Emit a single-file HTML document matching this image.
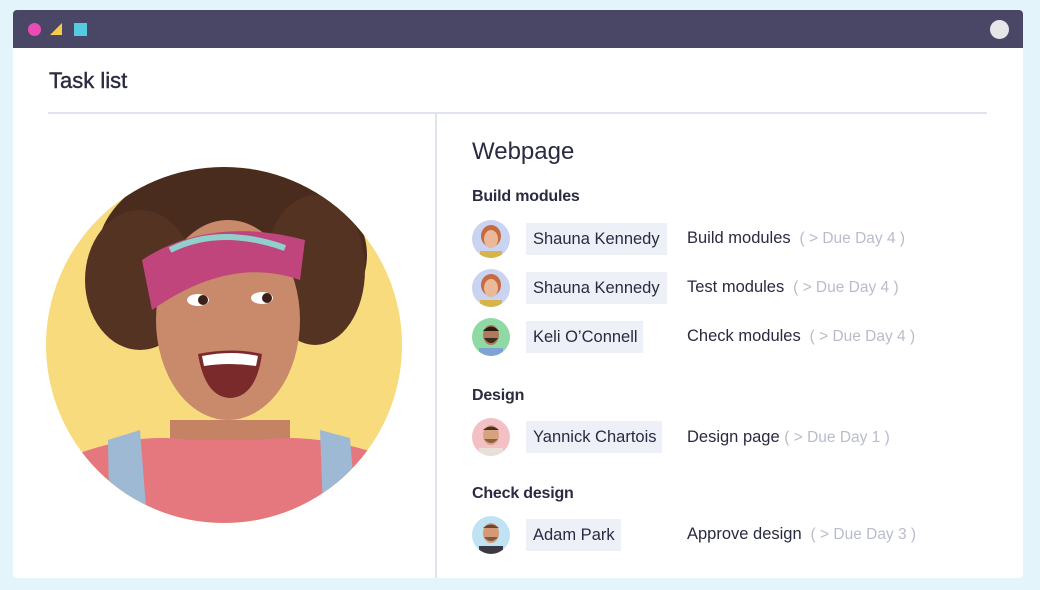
<!DOCTYPE html>
<html><head><meta charset="utf-8"><style>
*{margin:0;padding:0;box-sizing:border-box}
body{width:1040px;height:590px;background:#e3f4fb;font-family:"Liberation Sans",sans-serif;position:relative;overflow:hidden;color:#2a2a40}
.win{position:absolute;left:13px;top:10px;width:1010px;height:568px;background:#fff;border-radius:4px;overflow:hidden}
.bar{height:38px;background:#4a4766;position:relative}
.t{position:absolute;white-space:nowrap}
.h{font-size:16px;color:#2a2a40;font-weight:bold;letter-spacing:-0.2px}
.chip{position:absolute;height:32px;background:#eef0f8;font-size:16.5px;line-height:32px;padding-left:7px;color:#2a2a40}
.task{position:absolute;font-size:16.5px;color:#2a2a40;white-space:nowrap}
.task span{color:#b9bccb;font-size:15.5px}
.av{position:absolute;width:38px;height:38px;border-radius:50%;overflow:hidden}
</style></head><body>
<div class="win">
<div class="bar">
<div style="position:absolute;left:15px;top:13px;width:13px;height:13px;border-radius:50%;background:#ec4bb6"></div>
<svg style="position:absolute;left:36px;top:12px" width="14" height="14"><polygon points="13,1 13,13 1,13" fill="#f5cd4a"/></svg>
<div style="position:absolute;left:61px;top:13px;width:13px;height:13px;background:#54cbe0"></div>
<div style="position:absolute;left:977px;top:10px;width:19px;height:19px;border-radius:50%;background:#e6e6ea"></div>
</div>
</div>
<div class="t" style="left:49px;top:68px;font-size:22px;color:#2a2a40;-webkit-text-stroke:0.4px #2a2a40">Task list</div>
<div style="position:absolute;left:48px;top:112px;width:939px;height:2px;background:#dfe4ef"></div>
<div style="position:absolute;left:435px;top:114px;width:2px;height:464px;background:#dfe4ef"></div>

<svg style="position:absolute;left:0;top:0" width="1040" height="590">
<defs><clipPath id="c"><circle cx="224" cy="345" r="178"/></clipPath></defs>
<circle cx="224" cy="345" r="178" fill="#f8db7c"/>
<g clip-path="url(#c)">
<ellipse cx="232" cy="255" rx="135" ry="95" fill="#4a2c1e"/>
<ellipse cx="140" cy="280" rx="55" ry="70" fill="#553322"/>
<ellipse cx="315" cy="270" rx="50" ry="75" fill="#553322"/>
<rect x="170" y="420" width="120" height="60" fill="#c58366"/>
<path d="M40 470 Q120 430 190 440 L260 440 Q330 430 420 470 L420 560 L40 560Z" fill="#e4787e"/>
<path d="M108 440 L140 430 L150 560 L110 560Z" fill="#9db9d4"/>
<path d="M320 430 L350 438 L360 560 L325 560Z" fill="#9db9d4"/>
<ellipse cx="228" cy="320" rx="72" ry="100" fill="#c98a6c"/>
<path d="M142 260 Q210 215 305 240 L300 280 Q230 255 152 310Z" fill="#c0457c"/>
<path d="M170 250 Q220 225 285 248" stroke="#8fd0cc" stroke-width="6" fill="none"/>
<ellipse cx="198" cy="300" rx="11" ry="6" fill="#fff"/><circle cx="203" cy="300" r="5" fill="#3a2016"/>
<ellipse cx="262" cy="298" rx="11" ry="6" fill="#fff"/><circle cx="267" cy="298" r="5" fill="#3a2016"/>
<path d="M198 354 Q232 347 262 354 Q256 397 230 398 Q205 397 198 354Z" fill="#7a2a2a"/>
<path d="M202 356 Q232 350 258 356 L256 366 Q230 362 204 366Z" fill="#fff"/>
</g>
</svg>

<div class="t" style="left:472px;top:138px;font-size:24px;color:#2a2a40">Webpage</div>
<div class="t h" style="left:472px;top:188px">Build modules</div>
<div class="t h" style="left:472px;top:387px">Design</div>
<div class="t h" style="left:472px;top:485px">Check design</div>

<div class="av" style="left:472px;top:220px;background:#c9d3f2"><svg width="38" height="38"><ellipse cx="19" cy="16" rx="10" ry="11" fill="#c76a3e"/><ellipse cx="19" cy="19" rx="7" ry="9" fill="#eab89a"/><rect x="8" y="31" width="22" height="8" fill="#d8b24a"/></svg></div>
<div class="chip" style="left:526px;top:223px;width:141px">Shauna Kennedy</div>
<div class="task" style="left:687px;top:229px">Build modules <span>&nbsp;( &gt; Due Day 4 )</span></div>

<div class="av" style="left:472px;top:269px;background:#c9d3f2"><svg width="38" height="38"><ellipse cx="19" cy="16" rx="10" ry="11" fill="#c76a3e"/><ellipse cx="19" cy="19" rx="7" ry="9" fill="#eab89a"/><rect x="8" y="31" width="22" height="8" fill="#d8b24a"/></svg></div>
<div class="chip" style="left:526px;top:272px;width:141px">Shauna Kennedy</div>
<div class="task" style="left:687px;top:278px">Test modules <span>&nbsp;( &gt; Due Day 4 )</span></div>

<div class="av" style="left:472px;top:318px;background:#8fd9a4"><svg width="38" height="38"><ellipse cx="19" cy="17" rx="8" ry="10" fill="#b07a5a"/><path d="M11 13 Q19 4 27 13" fill="#2a1a14"/><path d="M12 20 Q19 30 26 20" fill="#3a2a20"/><rect x="7" y="30" width="24" height="8" fill="#7fa3d4"/></svg></div>
<div class="chip" style="left:526px;top:321px;width:117px">Keli O’Connell</div>
<div class="task" style="left:687px;top:327px">Check modules <span>&nbsp;( &gt; Due Day 4 )</span></div>

<div class="av" style="left:472px;top:418px;background:#f3c0c6"><svg width="38" height="38"><ellipse cx="19" cy="17" rx="8" ry="10" fill="#d8a27e"/><path d="M11 12 Q19 5 27 12" fill="#4a3020"/><path d="M12 21 Q19 29 26 21" fill="#8a6040"/><rect x="7" y="30" width="24" height="8" fill="#e8e0d8"/></svg></div>
<div class="chip" style="left:526px;top:421px;width:136px">Yannick Chartois</div>
<div class="task" style="left:687px;top:428px">Design page <span>( &gt; Due Day 1 )</span></div>

<div class="av" style="left:472px;top:516px;background:#bfe3f3"><svg width="38" height="38"><ellipse cx="19" cy="17" rx="8" ry="10" fill="#d49a78"/><path d="M11 12 Q19 5 27 12" fill="#6a4830"/><path d="M12 21 Q19 29 26 21" fill="#7a5a40"/><rect x="7" y="30" width="24" height="8" fill="#3a3a44"/></svg></div>
<div class="chip" style="left:526px;top:519px;width:95px">Adam Park</div>
<div class="task" style="left:687px;top:525px">Approve design <span>&nbsp;( &gt; Due Day 3 )</span></div>
</body></html>
